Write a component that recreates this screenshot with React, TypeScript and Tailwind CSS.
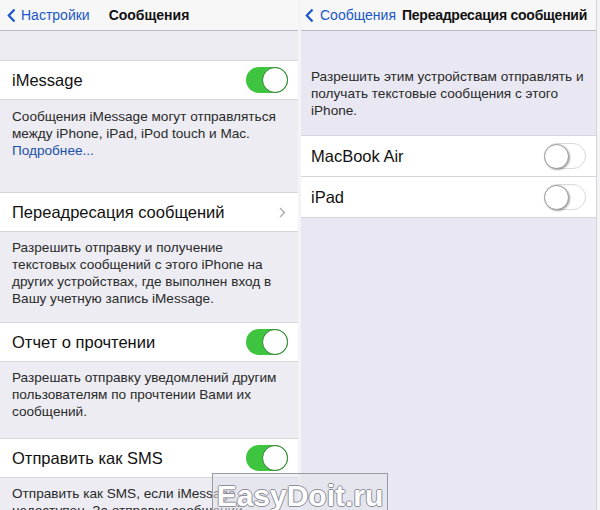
import React from "react";

function Toggle(props: { on: boolean }) {
  if (props.on) {
    return (
      <div className="w-[42px] h-[26px] rounded-full bg-[#3ec43f] flex items-center justify-end">
        <div className="w-[26px] h-[26px] rounded-full bg-white border-[1.5px] border-[#2a7f2e]" />
      </div>
    );
  }
  return (
    <div className="w-[42px] h-[26px] rounded-full bg-white border border-[#d9d9de] flex items-center">
      <div className="w-[25px] h-[25px] -ml-px rounded-full bg-white border border-[#9a9a9a] shadow-[1px_1px_2px_rgba(0,0,0,0.35)]" />
    </div>
  );
}

function Chevron(props: { className?: string }) {
  return (
    <svg width="9" height="15" viewBox="0 0 9 15" className={props.className}>
      <path d="M7.5 1.5 L1.8 7.5 L7.5 13.5" fill="none" stroke="currentColor" strokeWidth="2.2" />
    </svg>
  );
}

function NavBar(props: { back: string; title: string; right?: boolean }) {
  return (
    <div
      className={
        props.right
          ? "h-[31px] shrink-0 bg-[#f7f7f8] border-b border-[#b9b9be] flex items-center pl-[4px] text-[14px] whitespace-nowrap"
          : "h-[31px] shrink-0 bg-[#f7f7f8] border-b border-[#b9b9be] flex items-center pl-[7px] text-[14px] whitespace-nowrap"
      }
    >
      <Chevron className={props.right ? "text-[#1a56c8] mr-[6px]" : "text-[#1a56c8] mr-[5px]"} />
      <span className="text-[#1a56c8]">{props.back}</span>
      <span
        className={
          props.right
            ? "font-bold text-[#111] ml-[6px] tracking-[-0.25px]"
            : "font-bold text-[#111] ml-[19px]"
        }
      >
        {props.title}
      </span>
    </div>
  );
}

function Row(props: { label: string; on?: boolean; chevron?: boolean }) {
  return (
    <div className="h-[40px] shrink-0 bg-white border-y border-[#d6d6dc] flex items-center justify-between pl-[12px] pr-[10px]">
      <span className="text-[16.5px] text-[#111]">{props.label}</span>
      {props.chevron ? (
        <svg width="7" height="11" viewBox="0 0 7 11" className="mr-[2px]">
          <path d="M1 1 L5.5 5.5 L1 10" fill="none" stroke="#a8a8ae" strokeWidth="1.4" />
        </svg>
      ) : (
        <Toggle on={!!props.on} />
      )}
    </div>
  );
}

function Note(props: { children: React.ReactNode; top: string }) {
  return (
    <div className={props.top + " px-[12px] text-[13.6px] leading-[17px] text-[#2a2a2a]"}>
      {props.children}
    </div>
  );
}

export default function App() {
  return (
    <div
      className="relative w-[600px] h-[510px] overflow-hidden bg-[#f4f4f7] flex gap-[3px]"
      style={{ fontFamily: '"Liberation Sans", Arial, sans-serif' }}
    >
      {/* left: Сообщения */}
      <div className="w-[298px] shrink-0 bg-[#ececf2] flex flex-col">
        <NavBar back="Настройки" title="Сообщения" />
        <div className="h-[29px] shrink-0" />
        <Row label="iMessage" on />
        <Note top="pt-[8px]">
          Сообщения iMessage могут отправляться между iPhone, iPad, iPod touch и Mac.
          <div className="text-[#1c4fa8]">Подробнее...</div>
        </Note>
        <div className="h-[33px] shrink-0" />
        <Row label="Переадресация сообщений" chevron />
        <Note top="pt-[7px]">
          Разрешить отправку и получение текстовых сообщений с этого iPhone на других
          устройствах, где выполнен вход в Вашу учетную запись iMessage.
        </Note>
        <div className="h-[15px] shrink-0" />
        <Row label="Отчет о прочтении" on />
        <Note top="pt-[7px]">
          Разрешать отправку уведомлений другим пользователям по прочтении Вами их
          сообщений.
        </Note>
        <div className="h-[18px] shrink-0" />
        <Row label="Отправить как SMS" on />
        <Note top="pt-[7px]">
          Отправить как SMS, если iMessage недоступен. За отправку сообщений
        </Note>
      </div>

      {/* right: Переадресация сообщений */}
      <div className="w-[296px] shrink-0 bg-[#e9e8f2] border-r border-[#d4d4dc] flex flex-col">
        <NavBar back="Сообщения" title="Переадресация сообщений" right />
        <div className="px-[10px] pt-[37px] pb-[16px] text-[13.6px] leading-[17px] text-[#2a2a2a]">
          Разрешить этим устройствам отправлять и получать текстовые сообщения с этого
          iPhone.
        </div>
        <div className="bg-white border-y border-[#d6d6dc]">
          <div className="h-[41px] flex items-center justify-between pl-[10px] pr-[10px] border-b border-[#d6d6dc]">
            <span className="text-[16.5px] text-[#111]">MacBook Air</span>
            <Toggle on={false} />
          </div>
          <div className="h-[40px] flex items-center justify-between pl-[10px] pr-[10px]">
            <span className="text-[16.5px] text-[#111]">iPad</span>
            <Toggle on={false} />
          </div>
        </div>
      </div>

      {/* watermark */}
      <div className="absolute left-[212px] top-[473px] w-[176px] h-[40px] border border-[#9a9aa6] bg-[rgba(225,225,235,0.55)] flex items-center justify-center">
        <span
          className="text-[30px] font-bold text-white leading-none pt-[6px]"
          style={{
            textShadow:
              "1px 0 0 #8e8e9a, -1px 0 0 #8e8e9a, 0 1px 0 #8e8e9a, 0 -1px 0 #8e8e9a",
          }}
        >
          EasyDoit.ru
        </span>
      </div>
    </div>
  );
}
